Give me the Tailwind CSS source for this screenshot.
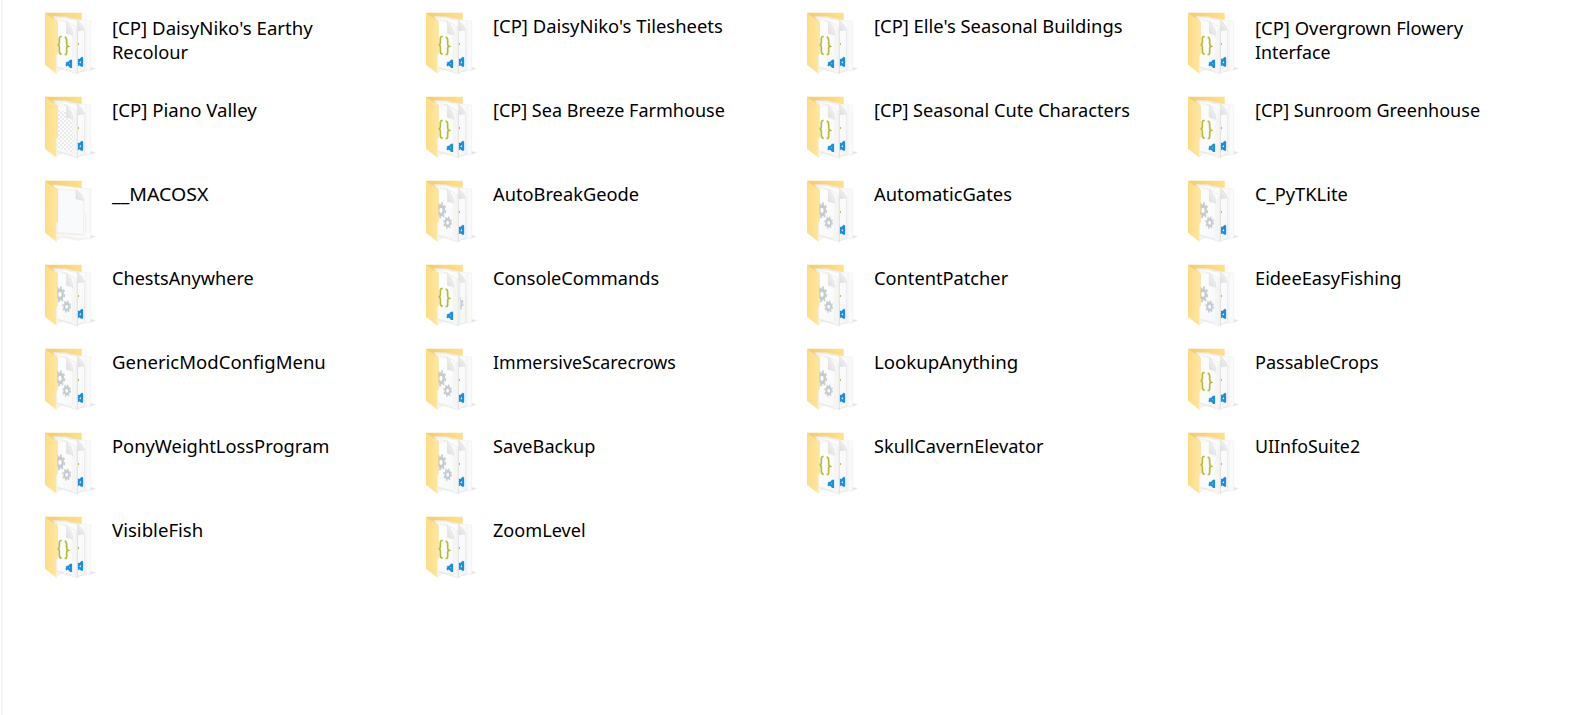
<!DOCTYPE html>
<html lang="en">
<head>
<meta charset="utf-8">
<title>Mods</title>
<script src="https://cdn.jsdelivr.net/npm/@tailwindcss/browser@4"></script>
</head>
<body class="bg-white">
<svg class="absolute size-0">
  <defs>
    <linearGradient id="flap" x1="0" y1="0" x2="1" y2="0"><stop offset="0" stop-color="#fddc86"/><stop offset="1" stop-color="#ffe7a0"/></linearGradient>
    <linearGradient id="back" x1="0" y1="0" x2="1" y2="0"><stop offset="0" stop-color="#f3cb6c"/><stop offset="1" stop-color="#ffe08a"/></linearGradient>
    <linearGradient id="sheet" x1="0" y1="0" x2="1" y2="1"><stop offset="0" stop-color="#ffffff"/><stop offset="1" stop-color="#f6f7f8"/></linearGradient>
    <linearGradient id="curl" x1="0" y1="1" x2="1" y2="0"><stop offset="0" stop-color="#dcdcdc"/><stop offset="1" stop-color="#fafafa"/></linearGradient>
    <pattern id="check" width="12" height="12" patternUnits="userSpaceOnUse"><rect width="12" height="12" fill="#fcfcfc"/><path d="M0 0h6v6H0zM6 6h6v6H6z" fill="#e9eaea"/></pattern>
  </defs>
  <symbol id="base" viewBox="0 0 210 240">
    <path d="M62 206l18-9 44 10 40-9 14-6-20-2-96 2z" fill="#f3f3f3"/>
    <path d="M163 200l17-7-17-3z" fill="#e4e4e4"/>
    <path d="M27 26h110v34H60z" fill="url(#back)"/>
  </symbol>
  <symbol id="flapShape" viewBox="0 0 210 240">
    <path d="M27 27l37 25v98q-5 2-4 10l2 50-35-28z" fill="url(#flap)"/>
    <path d="M27 27l37 25v98" fill="none" stroke="#f4d27c" stroke-width="1.5"/>
  </symbol>
  <symbol id="gear" viewBox="0 0 40 40">
    <circle cx="20" cy="20" r="10" fill="none" stroke="#c3cad0" stroke-width="8"/>
    <circle cx="20" cy="20" r="16" fill="none" stroke="#c3cad0" stroke-width="5" stroke-dasharray="6.3 6.266"/>
  </symbol>
  <!-- two sheets standing behind the front one -->
  <symbol id="sheets" viewBox="0 0 210 240">
    <path d="M52 38l34 0 44 10 34 3v149l-34 0z" fill="#fafafa" stroke="#ececec" stroke-width="1.5"/>
    <path d="M150 52v146" stroke="#efefef" stroke-width="2"/>
    <path d="M54 38l70 8 22 34v119l-22 7-60-80z" fill="url(#sheet)" stroke="#e2e2e2" stroke-width="2"/>
    <path d="M98 45l26 4 21 30" fill="none" stroke="#f4e5bd" stroke-width="1.5"/>
    <path d="M124 49v31l22-2q-5-17-22-29z" fill="url(#curl)" stroke="#d9d9d9"/>
  </symbol>
  <symbol id="front" viewBox="0 0 210 240">
    <path d="M53 41l39 10 32 21v138l-62-20V45z" fill="url(#sheet)" stroke="#dedede" stroke-width="1.5"/>
    <path d="M66 50l25 3 20 40v104" fill="none" stroke="#f6e7c1" stroke-width="1.5"/>
    <path d="M91 53v35l20 6q-1-27-20-41z" fill="url(#curl)" stroke="#d6d6d6"/>
    <path d="M113 72h11v137l-11-5z" fill="#f5f5f6"/>
    <path d="M124 74v135" stroke="#dadada" stroke-width="2"/>
    <path d="M66 190l44 11" stroke="#dcdcdc" stroke-width="2" stroke-dasharray="3 2"/>
  </symbol>
  <symbol id="midMarks" viewBox="0 0 210 240">
    <path d="M127 117v6" stroke="#bcc04a" stroke-width="4"/>
    <path d="M138 162v23l-13-9zM138 162l-14 13M125 164v4M125 182v4" fill="none" stroke="#1b8fdc" stroke-width="7" stroke-linejoin="round"/>
  </symbol>
  <symbol id="braces" viewBox="0 0 210 240">
    <path d="M77 98q-7-2-7 6v12q0 5-4 6 4 2 4 8v12q0 8 7 9M86 99q6 2 6 10v10q0 6 4 8-4 1-4 6v12q0 8-6 6" fill="none" stroke="#b4bb35" stroke-width="5"/>
    <path d="M105 167v25M105 169l-15 16M105 190l-14-15" fill="none" stroke="#1b8fdc" stroke-width="6.5" stroke-linejoin="round"/>
  </symbol>
  <symbol id="json" viewBox="0 0 210 240">
    <use href="#base"/><use href="#sheets"/><use href="#midMarks"/><use href="#front"/><use href="#braces"/><use href="#flapShape"/>
  </symbol>
  <symbol id="gears" viewBox="0 0 210 240">
    <use href="#gear" transform="translate(55 89) scale(.85 1.3)" width="40" height="40"/>
    <use href="#gear" transform="translate(78 132) scale(.7 1)" width="40" height="40"/>
  </symbol>
  <symbol id="dll" viewBox="0 0 210 240">
    <use href="#base"/><use href="#sheets"/><use href="#midMarks"/><use href="#front"/><use href="#gears"/><use href="#flapShape"/>
  </symbol>
  <symbol id="jsondll" viewBox="0 0 210 240">
    <use href="#base"/><use href="#sheets"/><use href="#gear" transform="translate(111 121) scale(.75 1.1)" width="40" height="40"/>
    <path d="M147 125v60" stroke="#f6e7c1" stroke-width="2"/>
    <use href="#front"/><path d="M124 74h6v130l-6 5z" fill="#eeeeef"/><use href="#braces"/><use href="#flapShape"/>
  </symbol>
  <symbol id="image" viewBox="0 0 210 240">
    <use href="#base"/><use href="#sheets"/><use href="#midMarks"/><use href="#front"/>
    <path d="M64 66l26 4v20l20 6v98l-46-13z" fill="url(#check)"/><use href="#flapShape"/>
  </symbol>
  <symbol id="plain" viewBox="0 0 210 240">
    <use href="#base"/>
    <path d="M53 38l111 13v149l-34 0-68-12z" fill="#fafafa" stroke="#e7e7e7" stroke-width="1.5"/>
    <path d="M72 53l47 2 24 30v104l-79-5V53z" fill="#f9fafb" stroke="#eee4cc" stroke-width="1.5"/>
    <path d="M120 53v27l24 6q-3-20-24-33z" fill="url(#curl)" stroke="#d0d0d0"/>
    <path d="M149 124v58" stroke="#f6ebce" stroke-width="2"/>
    <path d="M66 182l70 5" stroke="#dedede" stroke-width="2" stroke-dasharray="3 2"/>
    <use href="#flapShape"/>
  </symbol>
</svg>
<main class="h-[715px] w-[1583px] overflow-hidden pl-px">
  <div id="grid" class="grid h-full grid-cols-[repeat(4,381px)] content-start border-l-2 border-[#f6f6f6] pt-1 pl-[33px] font-['Noto_Sans',sans-serif] text-[18.5px] leading-6 text-black"></div>
</main>
<script>
// [icon, [line, width], ...]
const folders = [
  ['json', ["[CP] DaisyNiko's Earthy", 201], ['Recolour', 76]],
  ['json', ["[CP] DaisyNiko's Tilesheets", 230]],
  ['json', ["[CP] Elle's Seasonal Buildings", 248]],
  ['json', ['[CP] Overgrown Flowery', 208], ['Interface', 76]],
  ['image', ['[CP] Piano Valley', 145]],
  ['json', ['[CP] Sea Breeze Farmhouse', 232]],
  ['json', ['[CP] Seasonal Cute Characters', 256]],
  ['json', ['[CP] Sunroom Greenhouse', 225]],
  ['plain', ['__MACOSX', 96]],
  ['dll', ['AutoBreakGeode', 146]],
  ['dll', ['AutomaticGates', 138]],
  ['dll', ['C_PyTKLite', 93]],
  ['dll', ['ChestsAnywhere', 142]],
  ['jsondll', ['ConsoleCommands', 166]],
  ['dll', ['ContentPatcher', 134]],
  ['dll', ['EideeEasyFishing', 147]],
  ['dll', ['GenericModConfigMenu', 213.5]],
  ['dll', ['ImmersiveScarecrows', 183]],
  ['dll', ['LookupAnything', 144]],
  ['json', ['PassableCrops', 124]],
  ['dll', ['PonyWeightLossProgram', 217]],
  ['dll', ['SaveBackup', 102]],
  ['json', ['SkullCavernElevator', 169]],
  ['json', ['UIInfoSuite2', 105]],
  ['json', ['VisibleFish', 91.5]],
  ['json', ['ZoomLevel', 93]],
];
const grid = document.getElementById('grid');
for (const [icon, ...lines] of folders) {
  const item = document.createElement('div');
  item.className = 'flex h-[84px] items-start gap-1.5';
  const pad = lines.length > 1 ? 'pt-3' : 'pt-2.5';
  item.innerHTML = `<svg class="h-20 w-[70px] shrink-0" viewBox="0 0 210 240"><use href="#${icon}"/></svg>
    <div class="flex flex-col items-start whitespace-nowrap ${pad}">${lines.map(([t, w]) => `<span class="block origin-left" data-width="${w}">${t}</span>`).join('')}</div>`;
  grid.append(item);
}
function fitLabels() {
  for (const el of document.querySelectorAll('[data-width]'))
    el.style.transform = `scaleX(${el.dataset.width / el.offsetWidth})`;
}
fitLabels();
new ResizeObserver(fitLabels).observe(grid.querySelector('[data-width]'));
addEventListener('load', fitLabels);
</script>
</body>
</html>
